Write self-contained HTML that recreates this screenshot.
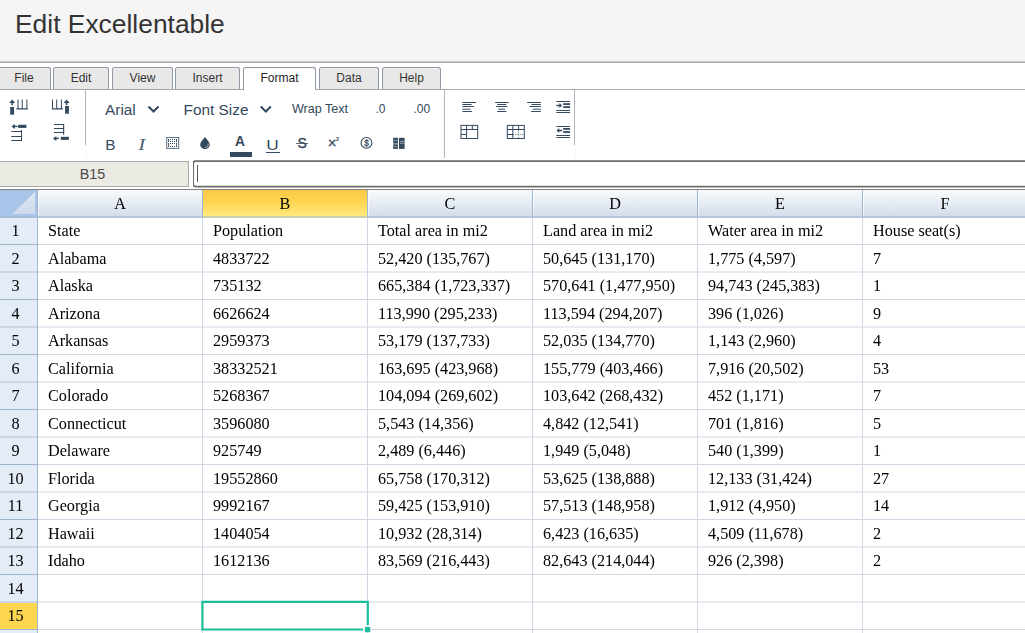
<!DOCTYPE html>
<html>
<head>
<meta charset="utf-8">
<title>Edit Excellentable</title>
<style>
html,body{margin:0;padding:0;}
body{width:1025px;height:633px;overflow:hidden;background:#fff;position:relative;font-family:"Liberation Sans",Arial,sans-serif;color:#333;}
.abs{position:absolute;}
#hdr{left:0;top:0;width:1025px;height:60px;background:#f5f5f5;}
#hdr h1{position:absolute;left:15px;top:10px;margin:0;font-size:26.4px;line-height:28px;font-weight:normal;color:#333;white-space:nowrap;}
#hdrline{left:0;top:60px;width:1025px;height:3px;background:linear-gradient(#f1f1f1 0,#f1f1f1 1px,#cecece 1px,#cecece 2px,#a9a9a9 2px,#a9a9a9 3px);}
.tab{position:absolute;top:67px;height:22px;box-sizing:border-box;box-shadow:inset 0 1px 0 #f4f4f4;border:1px solid #8f98a6;border-bottom:none;border-radius:2.5px 2.5px 0 0;background:#e8e8e8;font-size:12px;line-height:20px;text-align:center;color:#333;}
.tab.on{background:#fff;height:23px;color:#222;}
#tabline{left:0;top:89px;width:1025px;height:1px;background:#a8a8a8;}
.vsep{position:absolute;width:1px;background:#b0b4bd;}
#namebox{left:-1px;top:161px;width:190px;height:26px;box-sizing:border-box;padding-right:3px;background:#ebebe4;border:1px solid #a9a9a9;font-size:14.3px;line-height:24px;text-align:center;color:#4a4a4a;}
#fx{left:193px;top:160px;width:840px;height:28px;}
#caret{left:197px;top:165px;width:1px;height:17px;background:#555;}
#gridtop{left:0;top:189px;width:1025px;height:1px;background:#808080;}
#grid{will-change:transform;left:0;top:190px;width:1025px;height:443px;overflow:hidden;font-family:"Liberation Serif","Times New Roman",serif;font-size:16.2px;color:#000;}
.ch{position:absolute;z-index:2;top:0;height:26px;width:164px;border-right:1px solid #9eb6ce;border-bottom:2px solid #b4c7dd;background:linear-gradient(#f8fbfd,#d4ddeb);box-shadow:inset 1px 0 0 rgba(255,255,255,.6);text-align:center;line-height:29px;}
.ch.sel{background:linear-gradient(#fbc947,#ffd550 45%,#ffea7d);border-bottom-color:#c9cfa6;box-shadow:none;}
.rh{position:absolute;left:0;width:38px;padding-right:6px;border-right:1px solid #9eb6ce;background:#e4ecf7;text-align:center;box-sizing:border-box;}
.rh.sel{background:#fdd650;}
.corner{position:absolute;z-index:2;left:0;top:0;width:37px;height:26px;background:#a9c4e9;border-right:1px solid #9eb6ce;border-bottom:2px solid #a6bcd9;}
.corner:after{content:"";position:absolute;left:12px;top:2px;width:23px;height:22px;background:linear-gradient(#dfe7f3,#cfdaec);clip-path:polygon(100% 0,100% 100%,0 100%);}
.selbox{position:absolute;left:201px;top:411px;width:168px;height:29px;box-sizing:border-box;border:2px solid #21b391;}
.selh{position:absolute;left:364px;top:436px;width:5px;height:5px;background:#21b391;border:1px solid #fff;border-right:none;border-bottom:none}
.c{position:absolute;white-space:nowrap;}
.hl{position:absolute;left:38px;width:990px;height:1px;background:#d0d7e5;}
.hl.b{height:2px;background:#e8ebf2;}
.rl{position:absolute;z-index:1;left:0;width:37px;height:1px;background:#9eb6ce;}
.rl.b{height:2px;background:#c9d6e6;}
.vl{position:absolute;top:27px;width:1px;height:420px;background:#d0d7e5;}
</style>
</head>
<body>
<div id="hdr" class="abs"><h1>Edit Excellentable</h1></div>
<div id="hdrline" class="abs"></div>

<div class="tab" style="left:-4px;width:55px;padding-left:1px">File</div>
<div class="tab" style="left:53px;width:56px">Edit</div>
<div class="tab" style="left:112px;width:61px">View</div>
<div class="tab" style="left:175px;width:65px">Insert</div>
<div id="tabline" class="abs"></div>
<div class="tab on" style="left:243px;width:73px">Format</div>
<div class="tab" style="left:319px;width:60px">Data</div>
<div class="tab" style="left:382px;width:59px">Help</div>

<div class="vsep" style="left:85px;top:90px;height:55px"></div>
<div class="vsep" style="left:444px;top:90px;height:68px"></div>
<div class="vsep" style="left:574px;top:90px;height:55px"></div>
<div class="vsep" style="left:86px;top:145px;height:13px;background:#f6f6f7"></div>
<div class="vsep" style="left:575px;top:145px;height:13px;background:#f6f6f7"></div>

<div id="toolbar">
<svg class="abs" style="left:0;top:0" width="1025" height="633" viewBox="0 0 1025 633" fill="none" stroke="none">
<g fill="#34495e" stroke="none">
<!-- icon 1: insert column left -->
<path d="M12.2 99.6 L15.2 103.1 H13 V105.2 H11.4 V103.1 H9.2 Z"/>
<rect x="10.2" y="107" width="3.9" height="7.7"/>
<path d="M17.5 99.6h1v8.7h3.2V99.6h1v8.7h3.7V99.6h1v8.7h.5v1.3H16.4v-1.3h1.1Z"/>
<!-- icon 2: insert column right -->
<path d="M66.6 99.6 L69.6 103.1 H67.4 V105 H65.8 V103.1 H63.6 Z"/>
<rect x="65.1" y="105.9" width="3.8" height="7.8"/>
<path d="M52 99.6h1v8.7h3.2V99.6h1v8.7h3.7V99.6h1v8.7h1v1.3H51.9v-1.3h.1Z"/>
<!-- icon 3: insert row above -->
<path d="M11.4 126.4 L14.9 123.9 V125.8 H17.6 V127 H14.9 V128.9 Z"/>
<rect x="18.1" y="124.8" width="8.3" height="3.1"/>
<path d="M11.3 131H22V141H11.3v-1H21v-3.1H11.3v-1H21V132H11.3Z M21 130h1v1h-1Z"/>
<!-- icon 4: insert row below -->
<path d="M52.9 138.4 L56.4 135.9 V137.8 H59 V139 H56.4 V140.9 Z"/>
<rect x="60.8" y="136.8" width="8.1" height="3.1"/>
<path d="M53.9 124H64.2V134.8H63.1V133H53.9v-1H63.1v-3H53.9v-1H63.1v-3H53.9Z"/>
</g>

<!-- font dropdowns -->
<g font-family="Liberation Sans, Arial, sans-serif" fill="#34495e">
<text x="105" y="115" font-size="15.4">Arial</text>
<text x="183.5" y="115" font-size="15.4">Font Size</text>
<text x="292" y="113" font-size="12.55">Wrap Text</text>
<text x="375.5" y="113" font-size="12">.0</text>
<text x="413.5" y="113" font-size="12">.00</text>
<text x="105.3" y="150" font-size="15.4">B</text>
<text transform="translate(138.2 150.3) scale(1.2 1)" font-size="17.5" fill-opacity=".88" font-style="italic" font-family="Liberation Serif, Times New Roman, serif">I</text>
<text transform="translate(235 145.6) scale(0.93 1)" font-size="14.8" font-weight="bold">A</text>
<text transform="translate(266.3 150) scale(1.12 1)" font-size="15.4">U</text>
<text transform="translate(297.4 147.6) scale(0.93 1)" font-size="15" stroke="#34495e" stroke-width=".35">S</text>
<text transform="translate(328.4 146.1) scale(1.36 1)" font-size="10.9" stroke="#34495e" stroke-width=".3">x</text>
<text x="336" y="140.8" font-size="5.5" font-weight="bold">2</text>
<text x="364.3" y="146" font-size="8.3" stroke="#34495e" stroke-width=".25">$</text>
</g>
<g stroke="#34495e" stroke-width="2.05" fill="none">
<path d="M148.5 106.5 L153.5 111.5 L158.5 106.5"/>
<path d="M260.8 106.5 L265.8 111.5 L270.8 106.5"/>
</g>
<!-- border icon -->
<g fill="none">
<rect x="166.7" y="137.5" width="12" height="10.9" stroke="#5d6e82"/>
<g stroke="#34495e">
<path d="M168 139.5H177M168 141.5H177M168 143.5H177M168 146.5H177" stroke-dasharray="1 1"/>
<path d="M168.5 140V142M176.5 140V142M168.5 144V147M176.5 144V146" opacity=".8"/>
</g>
</g>
<!-- drop -->
<path d="M205 136.9 C207 139.5 209.8 142 209.8 144.4 C209.8 147 207.7 148.9 205 148.9 C202.3 148.9 200.2 147 200.2 144.4 C200.2 142 203 139.5 205 136.9Z" fill="#34495e"/>
<path d="M208.3 143.6 C208.5 146 207 147.5 205 147.6" stroke="#fff" stroke-width="0.7" fill="none" opacity=".9"/>
<!-- A underline bar -->
<rect x="230" y="152" width="22" height="5" fill="#34495e"/>
<!-- U underline, S strike -->
<rect x="266" y="152" width="14" height="1" fill="#34495e"/>
<rect x="296" y="143" width="12" height="1" fill="#34495e" opacity=".8"/>
<!-- dollar circle -->
<circle cx="366.5" cy="142.9" r="5.4" stroke="#34495e" stroke-width="1.1"/>
<!-- grid filled icon -->
<g fill="#34495e">
<rect x="393.2" y="137.8" width="4.7" height="5.8"/>
<rect x="393.2" y="144.3" width="4.7" height="4.6"/>
<rect x="399" y="137.8" width="5.6" height="11.1"/>
</g>
<g stroke="#dfe5ea" stroke-width="0.6">
<path d="M394 140.5H397M394 146.6H397M400 141.4H404M400 143.3H404"/>
</g>

<!-- align icons -->
<g fill="#34495e">
<rect x="462.3" y="102" width="13.7" height="1"/><rect x="462.3" y="104" width="9.4" height="1"/><rect x="462.3" y="106" width="11.6" height="1"/><rect x="462.3" y="108.7" width="8.2" height="1" /><rect x="462.3" y="111" width="9.6" height="1"/>
<rect x="495.1" y="102" width="13.5" height="1"/><rect x="497.2" y="104" width="9" height="1"/><rect x="496" y="106" width="11.4" height="1"/><rect x="498.3" y="108.7" width="6.8" height="1" /><rect x="497.2" y="111" width="9.2" height="1"/>
<rect x="527.1" y="102" width="13.7" height="1"/><rect x="531.4" y="104" width="9.4" height="1"/><rect x="529.4" y="106" width="11.4" height="1"/><rect x="532.9" y="108.7" width="7.9" height="1" /><rect x="531.2" y="111" width="9.6" height="1"/>
<!-- indent -->
<rect x="556.3" y="101" width="13.8" height="1"/><rect x="563.2" y="103.2" width="6.9" height="1.8"/><rect x="563.2" y="106.2" width="6.9" height="1.8"/><rect x="556.3" y="110" width="13.8" height="1"/><rect x="556.3" y="112" width="13.8" height="1"/>
<path d="M556.4 104.8h3v-1.9l2.7 2.6 -2.7 2.6v-1.9h-3Z"/>
<!-- outdent -->
<rect x="556.3" y="126" width="13.8" height="1"/><rect x="563.2" y="128" width="6.9" height="1.8"/><rect x="563.2" y="131.1" width="6.9" height="1.8"/><rect x="556.3" y="135" width="13.8" height="1"/><rect x="556.3" y="137" width="13.8" height="1"/>
<path d="M562.2 129.8h-3v-1.9l-2.7 2.6 2.7 2.6v-1.9h3Z"/>
</g>
<!-- merge -->
<g stroke="#34495e" stroke-width="1" fill="none">
<rect x="461" y="125.4" width="16.7" height="13.1"/>
<path d="M461 129.5H478M466.6 125.2V138.5M472.3 125.2V129.6M461 134.4H466.8"/>
<rect x="507.3" y="125.4" width="17" height="13.1"/>
<path d="M507 129.5H524.2M512.8 125.2V138.5M518.6 125.2V129.6M507 134.5H513"/>
<path d="M513 134.5H524M518.6 130V138.5" stroke-dasharray="1 1.3" opacity=".75"/>
</g>
</svg>

</div>

<div id="namebox" class="abs">B15</div>
<svg id="fx" class="abs" viewBox="0 0 840 28"><rect x="0.2" y="1.2" width="860" height="25.4" rx="2.4" fill="#fff" stroke="#6e6e6c" stroke-width="1.7"/></svg>
<div id="caret" class="abs"></div>
<div id="gridtop" class="abs"></div>

<div id="grid" class="abs">
<div class="corner"></div>
<div class="ch" style="left:38px">A</div>
<div class="ch sel" style="left:203px">B</div>
<div class="ch" style="left:368px">C</div>
<div class="ch" style="left:533px">D</div>
<div class="ch" style="left:698px">E</div>
<div class="ch" style="left:863px">F</div>
<div class="ch" style="left:1028px">G</div>
<div class="rh" style="top:27.0px;height:27.5px;line-height:29.5px">1</div>
<div class="hl" style="top:54px"></div>
<div class="rl" style="top:54px"></div>
<div class="c" style="left:48px;top:27.0px;line-height:29.5px">State</div>
<div class="c" style="left:213px;top:27.0px;line-height:29.5px">Population</div>
<div class="c" style="left:378px;top:27.0px;line-height:29.5px">Total area in mi2</div>
<div class="c" style="left:543px;top:27.0px;line-height:29.5px">Land area in mi2</div>
<div class="c" style="left:708px;top:27.0px;line-height:29.5px">Water area in mi2</div>
<div class="c" style="left:873px;top:27.0px;line-height:29.5px">House seat(s)</div>
<div class="rh" style="top:54.5px;height:27.5px;line-height:29.5px">2</div>
<div class="hl b" style="top:81px"></div>
<div class="rl b" style="top:81px"></div>
<div class="c" style="left:48px;top:54.5px;line-height:29.5px">Alabama</div>
<div class="c" style="left:213px;top:54.5px;line-height:29.5px">4833722</div>
<div class="c" style="left:378px;top:54.5px;line-height:29.5px">52,420 (135,767)</div>
<div class="c" style="left:543px;top:54.5px;line-height:29.5px">50,645 (131,170)</div>
<div class="c" style="left:708px;top:54.5px;line-height:29.5px">1,775 (4,597)</div>
<div class="c" style="left:873px;top:54.5px;line-height:29.5px">7</div>
<div class="rh" style="top:82.0px;height:27.5px;line-height:29.5px">3</div>
<div class="hl" style="top:109px"></div>
<div class="rl" style="top:109px"></div>
<div class="c" style="left:48px;top:82.0px;line-height:29.5px">Alaska</div>
<div class="c" style="left:213px;top:82.0px;line-height:29.5px">735132</div>
<div class="c" style="left:378px;top:82.0px;line-height:29.5px">665,384 (1,723,337)</div>
<div class="c" style="left:543px;top:82.0px;line-height:29.5px">570,641 (1,477,950)</div>
<div class="c" style="left:708px;top:82.0px;line-height:29.5px">94,743 (245,383)</div>
<div class="c" style="left:873px;top:82.0px;line-height:29.5px">1</div>
<div class="rh" style="top:109.5px;height:27.5px;line-height:29.5px">4</div>
<div class="hl b" style="top:136px"></div>
<div class="rl b" style="top:136px"></div>
<div class="c" style="left:48px;top:109.5px;line-height:29.5px">Arizona</div>
<div class="c" style="left:213px;top:109.5px;line-height:29.5px">6626624</div>
<div class="c" style="left:378px;top:109.5px;line-height:29.5px">113,990 (295,233)</div>
<div class="c" style="left:543px;top:109.5px;line-height:29.5px">113,594 (294,207)</div>
<div class="c" style="left:708px;top:109.5px;line-height:29.5px">396 (1,026)</div>
<div class="c" style="left:873px;top:109.5px;line-height:29.5px">9</div>
<div class="rh" style="top:137.0px;height:27.5px;line-height:29.5px">5</div>
<div class="hl" style="top:164px"></div>
<div class="rl" style="top:164px"></div>
<div class="c" style="left:48px;top:137.0px;line-height:29.5px">Arkansas</div>
<div class="c" style="left:213px;top:137.0px;line-height:29.5px">2959373</div>
<div class="c" style="left:378px;top:137.0px;line-height:29.5px">53,179 (137,733)</div>
<div class="c" style="left:543px;top:137.0px;line-height:29.5px">52,035 (134,770)</div>
<div class="c" style="left:708px;top:137.0px;line-height:29.5px">1,143 (2,960)</div>
<div class="c" style="left:873px;top:137.0px;line-height:29.5px">4</div>
<div class="rh" style="top:164.5px;height:27.5px;line-height:29.5px">6</div>
<div class="hl b" style="top:191px"></div>
<div class="rl b" style="top:191px"></div>
<div class="c" style="left:48px;top:164.5px;line-height:29.5px">California</div>
<div class="c" style="left:213px;top:164.5px;line-height:29.5px">38332521</div>
<div class="c" style="left:378px;top:164.5px;line-height:29.5px">163,695 (423,968)</div>
<div class="c" style="left:543px;top:164.5px;line-height:29.5px">155,779 (403,466)</div>
<div class="c" style="left:708px;top:164.5px;line-height:29.5px">7,916 (20,502)</div>
<div class="c" style="left:873px;top:164.5px;line-height:29.5px">53</div>
<div class="rh" style="top:192.0px;height:27.5px;line-height:29.5px">7</div>
<div class="hl" style="top:219px"></div>
<div class="rl" style="top:219px"></div>
<div class="c" style="left:48px;top:192.0px;line-height:29.5px">Colorado</div>
<div class="c" style="left:213px;top:192.0px;line-height:29.5px">5268367</div>
<div class="c" style="left:378px;top:192.0px;line-height:29.5px">104,094 (269,602)</div>
<div class="c" style="left:543px;top:192.0px;line-height:29.5px">103,642 (268,432)</div>
<div class="c" style="left:708px;top:192.0px;line-height:29.5px">452 (1,171)</div>
<div class="c" style="left:873px;top:192.0px;line-height:29.5px">7</div>
<div class="rh" style="top:219.5px;height:27.5px;line-height:29.5px">8</div>
<div class="hl b" style="top:246px"></div>
<div class="rl b" style="top:246px"></div>
<div class="c" style="left:48px;top:219.5px;line-height:29.5px">Connecticut</div>
<div class="c" style="left:213px;top:219.5px;line-height:29.5px">3596080</div>
<div class="c" style="left:378px;top:219.5px;line-height:29.5px">5,543 (14,356)</div>
<div class="c" style="left:543px;top:219.5px;line-height:29.5px">4,842 (12,541)</div>
<div class="c" style="left:708px;top:219.5px;line-height:29.5px">701 (1,816)</div>
<div class="c" style="left:873px;top:219.5px;line-height:29.5px">5</div>
<div class="rh" style="top:247.0px;height:27.5px;line-height:29.5px">9</div>
<div class="hl" style="top:274px"></div>
<div class="rl" style="top:274px"></div>
<div class="c" style="left:48px;top:247.0px;line-height:29.5px">Delaware</div>
<div class="c" style="left:213px;top:247.0px;line-height:29.5px">925749</div>
<div class="c" style="left:378px;top:247.0px;line-height:29.5px">2,489 (6,446)</div>
<div class="c" style="left:543px;top:247.0px;line-height:29.5px">1,949 (5,048)</div>
<div class="c" style="left:708px;top:247.0px;line-height:29.5px">540 (1,399)</div>
<div class="c" style="left:873px;top:247.0px;line-height:29.5px">1</div>
<div class="rh" style="top:274.5px;height:27.5px;line-height:29.5px">10</div>
<div class="hl b" style="top:301px"></div>
<div class="rl b" style="top:301px"></div>
<div class="c" style="left:48px;top:274.5px;line-height:29.5px">Florida</div>
<div class="c" style="left:213px;top:274.5px;line-height:29.5px">19552860</div>
<div class="c" style="left:378px;top:274.5px;line-height:29.5px">65,758 (170,312)</div>
<div class="c" style="left:543px;top:274.5px;line-height:29.5px">53,625 (138,888)</div>
<div class="c" style="left:708px;top:274.5px;line-height:29.5px">12,133 (31,424)</div>
<div class="c" style="left:873px;top:274.5px;line-height:29.5px">27</div>
<div class="rh" style="top:302.0px;height:27.5px;line-height:29.5px">11</div>
<div class="hl" style="top:329px"></div>
<div class="rl" style="top:329px"></div>
<div class="c" style="left:48px;top:302.0px;line-height:29.5px">Georgia</div>
<div class="c" style="left:213px;top:302.0px;line-height:29.5px">9992167</div>
<div class="c" style="left:378px;top:302.0px;line-height:29.5px">59,425 (153,910)</div>
<div class="c" style="left:543px;top:302.0px;line-height:29.5px">57,513 (148,958)</div>
<div class="c" style="left:708px;top:302.0px;line-height:29.5px">1,912 (4,950)</div>
<div class="c" style="left:873px;top:302.0px;line-height:29.5px">14</div>
<div class="rh" style="top:329.5px;height:27.5px;line-height:29.5px">12</div>
<div class="hl b" style="top:356px"></div>
<div class="rl b" style="top:356px"></div>
<div class="c" style="left:48px;top:329.5px;line-height:29.5px">Hawaii</div>
<div class="c" style="left:213px;top:329.5px;line-height:29.5px">1404054</div>
<div class="c" style="left:378px;top:329.5px;line-height:29.5px">10,932 (28,314)</div>
<div class="c" style="left:543px;top:329.5px;line-height:29.5px">6,423 (16,635)</div>
<div class="c" style="left:708px;top:329.5px;line-height:29.5px">4,509 (11,678)</div>
<div class="c" style="left:873px;top:329.5px;line-height:29.5px">2</div>
<div class="rh" style="top:357.0px;height:27.5px;line-height:29.5px">13</div>
<div class="hl" style="top:384px"></div>
<div class="rl" style="top:384px"></div>
<div class="c" style="left:48px;top:357.0px;line-height:29.5px">Idaho</div>
<div class="c" style="left:213px;top:357.0px;line-height:29.5px">1612136</div>
<div class="c" style="left:378px;top:357.0px;line-height:29.5px">83,569 (216,443)</div>
<div class="c" style="left:543px;top:357.0px;line-height:29.5px">82,643 (214,044)</div>
<div class="c" style="left:708px;top:357.0px;line-height:29.5px">926 (2,398)</div>
<div class="c" style="left:873px;top:357.0px;line-height:29.5px">2</div>
<div class="rh" style="top:384.5px;height:27.5px;line-height:29.5px">14</div>
<div class="hl b" style="top:411px"></div>
<div class="rl b" style="top:411px"></div>
<div class="rh sel" style="top:412.0px;height:27.5px;line-height:29.5px">15</div>
<div class="hl" style="top:439px"></div>
<div class="rl" style="top:439px"></div>
<div class="rh" style="top:439.5px;height:27.5px;line-height:29.5px">16</div>
<div class="hl b" style="top:466px"></div>
<div class="rl b" style="top:466px"></div>
<div class="vl" style="left:202px"></div>
<div class="vl" style="left:367px"></div>
<div class="vl" style="left:532px"></div>
<div class="vl" style="left:697px"></div>
<div class="vl" style="left:862px"></div>
<div class="vl" style="left:1027px"></div>
<svg class="abs" style="left:0;top:0;z-index:3" width="1025" height="443" viewBox="0 190 1025 443" fill="none"><path d="M367.8 625V601.9H202.4V629.5H363" stroke="#1abc9c" stroke-width="2.2"/><rect x="365" y="627" width="5.2" height="5.2" fill="#1abc9c"/></svg>
</div>
</body>
</html>
